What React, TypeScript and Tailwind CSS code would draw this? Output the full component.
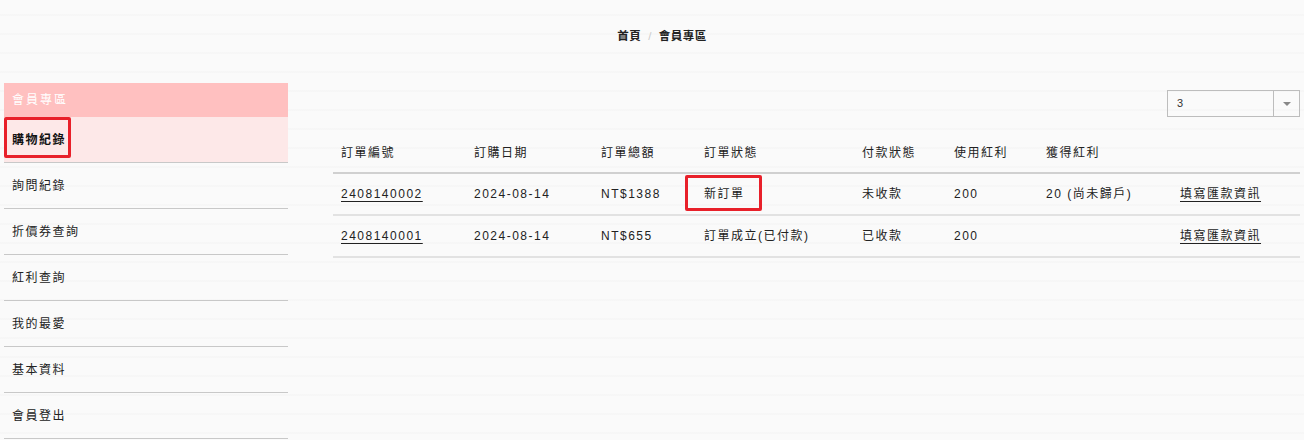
import React from "react";

const font = "font-['Liberation_Sans','Noto_Sans_CJK_TC',sans-serif]";

const menu = ["詢問紀錄", "折價券查詢", "紅利查詢", "我的最愛", "基本資料", "會員登出"];

const rows = [
  { id: "2408140002", date: "2024-08-14", total: "NT$1388", status: "新訂單", pay: "未收款", used: "200", got: "20 (尚未歸戶)", hl: true },
  { id: "2408140001", date: "2024-08-14", total: "NT$655", status: "訂單成立(已付款)", pay: "已收款", used: "200", got: "", hl: false },
];

export default function App() {
  return (
    <div
      className={`${font} w-[1304px] h-[440px] overflow-hidden text-[#222] bg-[#f9f9f9] bg-[repeating-linear-gradient(to_bottom,#fafafa_0px,#fafafa_14px,#f3f3f3_15px,#fafafa_16px,#fafafa_19px)]`}
    >
      <div className="h-[72px] flex items-center justify-center text-[11.5px] font-bold tracking-[0.5px] pt-[2px] pl-[20px]">
        <span>首頁</span>
        <span className="mx-[7px] text-[#ccc] font-normal">/</span>
        <span>會員專區</span>
      </div>
      <div className="flex pl-[4px] pt-[11px]">
        <div className="w-[284px] shrink-0">
          <div className="h-[34px] bg-[#ffc0c0] text-white text-[12px] tracking-[2px] flex items-center pl-[8px]">會員專區</div>
          <div className="relative h-[46px] bg-[#fde8e8] border-b border-[#c8c8c8] flex items-center pl-[8px] text-[12px] font-bold tracking-[1.5px] text-[#111]">
            購物紀錄
            <div className="absolute left-0 top-0 w-[67px] h-[41px] border-[3px] border-[#e8202a] rounded-[2px]" />
          </div>
          {menu.map((m) => (
            <div key={m} className="h-[46px] border-b border-[#c8c8c8] flex items-center pl-[8px] text-[12px] tracking-[1.5px] text-[#222]">
              {m}
            </div>
          ))}
        </div>
        <div className="ml-[45px] w-[967px] pt-[7px]">
          <div className="flex justify-end">
            <div className="w-[133px] h-[27px] border border-[#bdbdbd] flex text-[11px]">
              <div className="flex-1 flex items-center pl-[9px] text-[#333]">3</div>
              <div className="w-[26px] border-l border-[#bdbdbd] flex items-center justify-center">
                <div className="w-0 h-0 border-l-[4px] border-r-[4px] border-t-[4px] border-l-transparent border-r-transparent border-t-[#888]" />
              </div>
            </div>
          </div>
          <table className="mt-[20px] w-[967px] table-fixed border-collapse text-[12px] tracking-[1.5px]">
            <colgroup>
              <col className="w-[133px]" />
              <col className="w-[127px]" />
              <col className="w-[103px]" />
              <col className="w-[158px]" />
              <col className="w-[92px]" />
              <col className="w-[92px]" />
              <col className="w-[134px]" />
              <col />
            </colgroup>
            <thead>
              <tr className="h-[36px] border-b-2 border-[#d0d0d0] text-left">
                {["訂單編號", "訂購日期", "訂單總額", "訂單狀態", "付款狀態", "使用紅利", "獲得紅利", ""].map((h, i) => (
                  <th key={i} className="font-normal pl-[8px] pb-[3px] align-middle text-[#222]">{h}</th>
                ))}
              </tr>
            </thead>
            <tbody>
              {rows.map((r) => (
                <tr key={r.id} className="h-[42px] border-b-2 border-[#e2e2e2]">
                  <td className="pl-[8px]"><span className="underline underline-offset-[3px]">{r.id}</span></td>
                  <td className="pl-[8px]">{r.date}</td>
                  <td className="pl-[8px]">{r.total}</td>
                  <td className="pl-[8px] relative whitespace-nowrap">
                    {r.status}
                    {r.hl && (
                      <div className="absolute left-[-11px] top-[1px] w-[77px] h-[36px] border-[3px] border-[#e8202a] rounded-[2px]" />
                    )}
                  </td>
                  <td className="pl-[8px]">{r.pay}</td>
                  <td className="pl-[8px]">{r.used}</td>
                  <td className="pl-[8px] whitespace-nowrap">{r.got}</td>
                  <td className="pl-[8px] whitespace-nowrap"><span className="underline underline-offset-[3px]">填寫匯款資訊</span></td>
                </tr>
              ))}
            </tbody>
          </table>
        </div>
      </div>
    </div>
  );
}
